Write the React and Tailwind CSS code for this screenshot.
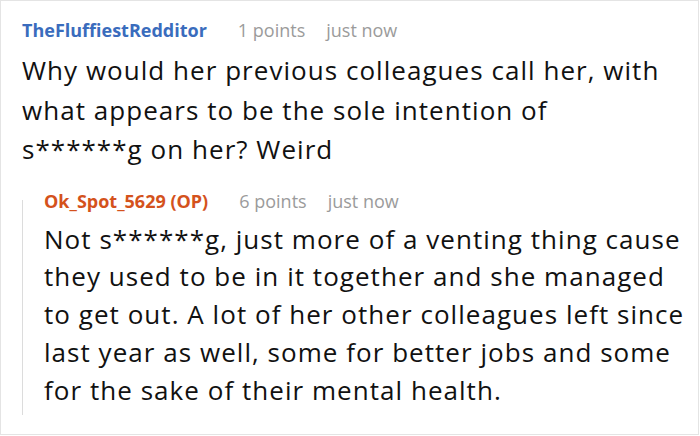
const parentLines = [
  "Why would her previous colleagues call her, with",
  "what appears to be the sole intention of",
  "s******g on her? Weird",
];

const replyLines = [
  "Not s******g, just more of a venting thing cause",
  "they used to be in it together and she managed",
  "to get out. A lot of her other colleagues left since",
  "last year as well, some for better jobs and some",
  "for the sake of their mental health.",
];

function Meta({ name, nameColor, points }) {
  return (
    <div className="flex items-center text-[18px] leading-[26px] whitespace-nowrap">
      <span className={`font-bold ${nameColor}`}>{name}</span>
      <span className="ml-[31px] text-[#9b9b9b]">{points} points</span>
      <span className="ml-[21px] text-[#9b9b9b]">just now</span>
    </div>
  );
}

export default function App() {
  return (
    <div className="w-[700px] h-[436px] bg-white font-['Open_Sans',_'Noto_Sans',_sans-serif] overflow-hidden">
      <div className="w-[699px] h-[435px] border border-[#e4e4e4] pl-[21px] pt-[16px]">
        {/* Parent comment */}
        <Meta name="TheFluffiestRedditor" nameColor="text-[#3a6cbd]" points={1} />
        <p className="mt-[8px] text-[26px] leading-[39.5px] tracking-[0.04em] text-[#111] whitespace-nowrap">
          {parentLines.map((l) => (
            <span key={l} className="block">{l}</span>
          ))}
        </p>

        {/* Reply */}
        <div className="mt-[30px] flex flex-col border-l border-[#dcdcdc] pl-[21px] pb-[6px]">
          <div className="-mt-[12px]">
            <Meta name="Ok_Spot_5629 (OP)" nameColor="text-[#d4521c]" points={6} />
          </div>
          <p className="mt-[7px] text-[26px] leading-[37.75px] tracking-[0.04em] text-[#111] whitespace-nowrap">
            {replyLines.map((l) => (
              <span key={l} className="block">{l}</span>
            ))}
          </p>
        </div>
      </div>
    </div>
  );
}
